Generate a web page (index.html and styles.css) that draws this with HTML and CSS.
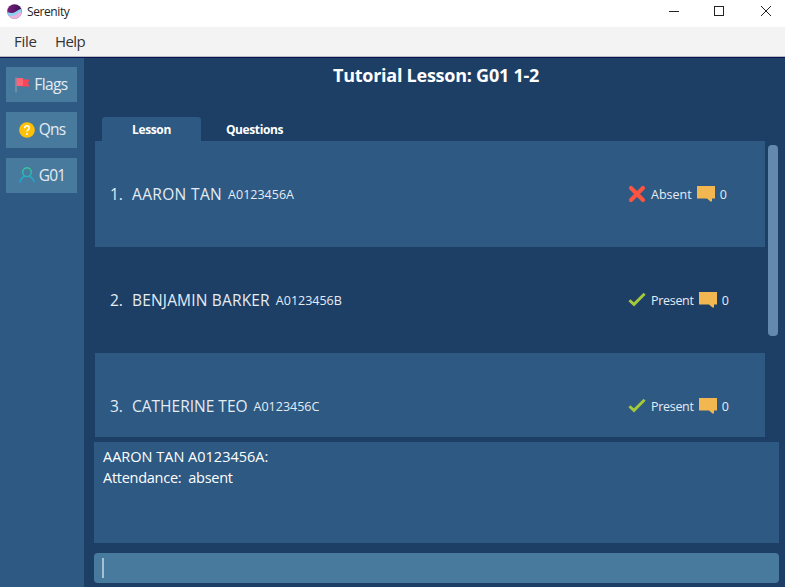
FILE: index.html
```html
<!DOCTYPE html>
<html lang="en">
<head>
<meta charset="utf-8">
<title>Serenity</title>
<link rel="stylesheet" href="styles.css">
</head>
<body>
<svg class="defs" width="0" height="0" aria-hidden="true">
  <symbol id="comment" viewBox="0 0 18 16"><path d="M0 0H18V12.4H15V15.6H13.500L10 12.4H0Z" fill="#f2b750"/></symbol>
  <symbol id="check" viewBox="0 0 18 15"><path d="M1.4 8.2L6 12.4L16.6 1.8" fill="none" stroke="#a5c83b" stroke-width="2.9"/></symbol>
  <symbol id="cross" viewBox="0 0 18 18"><path d="M3 3L15 15M15 3L3 15" stroke="#fb5541" stroke-width="4.2" stroke-linecap="round"/></symbol>
</svg>
<div class="window">
  <header class="titlebar">
    <svg class="logo" width="15" height="15" viewBox="0 0 15 15">
      <defs>
        <clipPath id="disc"><circle cx="7.5" cy="7.5" r="7.3"/></clipPath>
        <linearGradient id="sky"><stop stop-color="#7d1d7c"/><stop offset="1" stop-color="#3a104f"/></linearGradient>
      </defs>
      <g clip-path="url(#disc)">
        <rect width="15" height="15" fill="url(#sky)"/>
        <path d="M0 7.500C3 9.500 6 9.500 9 7.500S13 5 15 5V15H0Z" fill="#8fd0f2"/>
        <path d="M0 10.500C4 13 8 12 10 10S13 8.500 15 8V15H0Z" fill="#efb0da"/>
      </g>
    </svg>
    <span class="app-name">Serenity</span>
    <svg class="controls" width="104" height="12" viewBox="0 0 104 12" fill="none" stroke="#222">
      <path d="M0 6.500H10"/><rect x="45.500" y="1.500" width="9" height="9"/><path d="M92 1L102 11M102 1L92 11"/>
    </svg>
  </header>
  <nav class="menubar"><span class="file">File</span><span class="help">Help</span></nav>
  <div class="body">
    <aside class="sidebar">
      <div class="side-btn">
        <svg width="15" height="16" viewBox="0 0 15 16"><path d="M1 .5V15.500" stroke="#8fa1ae"/><path d="M1.500 1H8V9H1.500Z" fill="#ff6378"/><path d="M8 2.500H14.500L13 6L14.500 9.500H6.500L8 8Z" fill="#fb4455"/></svg>
        <span class="flags">Flags</span>
      </div>
      <div class="side-btn narrow">
        <svg width="16" height="16" viewBox="0 0 16 16"><circle cx="8" cy="8" r="7.800" fill="#fec107"/><path d="M5.700 6.300C5.700 3 10.400 3.200 10.300 6C10.200 7.700 8 7.500 8 9.600" fill="none" stroke="#fff" stroke-width="1.500"/><circle cx="8" cy="12" r="1" fill="#fff"/></svg>
        <span class="qns">Qns</span>
      </div>
      <div class="side-btn narrow">
        <svg width="16" height="16" viewBox="0 0 16 16" fill="none" stroke="url(#person)" stroke-width="1.300"><defs><linearGradient id="person" gradientUnits="userSpaceOnUse" x1="0" y1="0" x2="0" y2="16"><stop stop-color="#2edb93"/><stop offset="1" stop-color="#1c9ed8"/></linearGradient></defs><circle cx="8" cy="5.200" r="4.300"/><path d="M.8 15.500C1.500 12 3.500 10.300 5.800 9.200M15.200 15.500C14.500 12 12.500 10.300 10.200 9.200"/></svg>
        <span class="g01">G01</span>
      </div>
    </aside>
    <main class="main">
      <h1><span>Tutorial Lesson: G01 1-2</span></h1>
      <div class="tabs"><div class="tab active"><span>Lesson</span></div><div class="tab"><span>Questions</span></div></div>
      <div class="list-wrap">
        <div class="list">
          <div class="row"><span class="num">1.</span><span class="name n1">AARON TAN</span><span class="id">A0123456A</span>
            <div class="status"><svg class="mark" width="18" height="18"><use href="#cross"/></svg><span class="absent">Absent</span><svg class="note" width="18" height="16"><use href="#comment"/></svg><span class="count">0</span></div></div>
          <div class="row dark"><span class="num">2.</span><span class="name n2">BENJAMIN BARKER</span><span class="id">A0123456B</span>
            <div class="status"><svg class="mark" width="18" height="15"><use href="#check"/></svg><span class="present">Present</span><svg class="note" width="18" height="16"><use href="#comment"/></svg><span class="count">0</span></div></div>
          <div class="row"><span class="num">3.</span><span class="name n3">CATHERINE TEO</span><span class="id">A0123456C</span>
            <div class="status"><svg class="mark" width="18" height="15"><use href="#check"/></svg><span class="present">Present</span><svg class="note" width="18" height="16"><use href="#comment"/></svg><span class="count">0</span></div></div>
        </div>
        <div class="scroll-thumb"></div>
      </div>
      <div class="result"><div><span class="r1">AARON TAN A0123456A:</span></div><div><span class="r2">Attendance:&nbsp; absent</span></div></div>
      <div class="command"><div class="caret"></div></div>
    </main>
  </div>
</div>
</body>
</html>
```
FILE: styles.css
```css
* { box-sizing: border-box; }
body { margin: 0; overflow: hidden; font-family: "Open Sans", "Noto Sans", sans-serif; color: #e4ecf4; }
span { white-space: nowrap; }
svg { display: block; flex: none; }
.defs { position: absolute; }
.window { width: 785px; height: 587px; display: flex; flex-direction: column; background: #1d3f66; }
.titlebar { height: 27px; flex: none; display: flex; background: #fff; color: #222; padding: 4px 12px 0 7px; }
.app-name { font-size: 12px; line-height: 16px; margin-left: 5px; letter-spacing: -0.4px; }
.controls { margin: 1px 0 0 auto; }
.menubar { height: 30px; flex: none; display: flex; padding-left: 14px; background: #f3f3f3; color: #333; border-bottom: 1px solid #b9bcc0; font-size: 15px; line-height: 29px; }
.file { width: 41px; letter-spacing: -0.3px; }
.help { letter-spacing: -0.6px; }
.body { flex: 1; display: flex; border-top: 1px solid #0a1454; min-height: 0; }
.sidebar { width: 84px; flex: none; background: #2d5983; padding: 9px 0 0 6px; display: flex; flex-direction: column; gap: 10px; }
.side-btn { width: 71px; height: 35.3px; background: #487a9e; display: flex; align-items: center; justify-content: center; gap: 4px; font-size: 15.5px; line-height: 35px; letter-spacing: -0.6px; }
.side-btn.narrow { padding-left: 1px; }
.qns, .g01 { letter-spacing: -0.85px; }
.main { flex: 1; min-width: 0; display: flex; flex-direction: column; padding: 0 6px 0 10px; }
h1 { margin: 0; height: 59px; flex: none; font-size: 18px; line-height: 34px; font-weight: 700; text-align: center; color: #fff; letter-spacing: -0.25px; padding-right: 1px; }
.tabs { display: flex; height: 24px; flex: none; margin-left: 8px; gap: 4px; }
.tab { width: 99px; text-align: center; color: #fff; font-size: 12px; line-height: 26px; font-weight: 700; letter-spacing: -0.38px; }
.tab.active { background: #2d5983; border-radius: 3px 3px 0 0; }
.list-wrap { display: flex; height: 296px; flex: none; margin-left: 1px; }
.list { width: 670px; overflow: hidden; }
.row { height: 106px; background: #2d5983; display: flex; align-items: center; padding: 0 0 1px 15px; }
.row.dark { background: #1d3f66; }
.num { width: 22px; font-size: 15.5px; }
.name { font-size: 15.5px; }
.n1 { letter-spacing: 0.35px; }
.n2 { letter-spacing: 0.17px; }
.id { font-size: 12.5px; margin-left: 6px; padding-top: 1px; letter-spacing: 0; }
.status { width: 137px; margin-left: auto; display: flex; align-items: center; font-size: 12.5px; }
.status span { padding-top: 1px; }
.present { letter-spacing: -0.3px; }
.mark { margin-right: 5px; }
.note { margin: 0 5px; }
.scroll-thumb { width: 10px; height: 191px; margin: 4px 0 0 3px; border-radius: 4px; background: #6389af; }
.result { height: 101px; flex: none; margin-top: 5px; background: #2d5983; padding: 4px 9px; font-size: 14.5px; line-height: 21px; color: #fff; }
.r2 { letter-spacing: -0.27px; }
.command { height: 30px; flex: none; margin-top: 10px; background: #487a9e; border-radius: 4px; padding: 5px 8px; }
.caret { width: 2px; height: 20px; background: #a5c0d2; }
```
